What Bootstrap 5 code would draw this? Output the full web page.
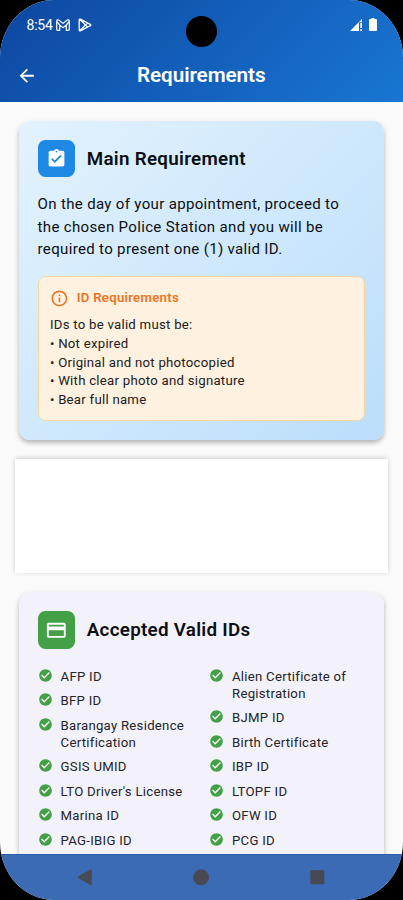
<!DOCTYPE html>
<html lang="en">
<head>
<meta charset="utf-8">
<meta name="viewport" content="width=device-width, initial-scale=1">
<title>Requirements</title>
<link href="https://cdn.jsdelivr.net/npm/bootstrap@5.3.0/dist/css/bootstrap.min.css" rel="stylesheet">
<style>
html,body{height:100%;background:#000;overflow:hidden}
body{font-family:Roboto,"Liberation Sans",sans-serif;color:#0b0e13}
svg{display:block;flex:none}
.phone{height:900px;width:403px;border-radius:54px/58px;background:#fafafa}
.top-bar{height:102px;background:linear-gradient(135deg,#0d47a1,#1976d2)}
.status{height:50px;padding:0 26px 0 26.5px}
.clock{font-size:14px;letter-spacing:-.2px;line-height:48px;margin-top:-1px}
.mail-icon{margin-left:3px}
.play-icon{margin-left:8px}
.battery-icon{margin-left:6px}
.status svg{margin-top:-1px}
.camera{width:31px;height:31px;border-radius:50%;background:#000;left:186px;top:16px}
.title-row{height:51px;padding:0 17px}
.page-title{font-size:20.7px;font-weight:600;letter-spacing:-.08px;line-height:50px;margin:-1px 20px 0 0}
.content-area{padding:19px 18.8px 0;min-height:0}
.panel{border-radius:11.3px;padding:18.8px;box-shadow:0 3px 4px rgba(0,0,0,.22),0 2px 7px rgba(0,0,0,.08)}
.panel-blue{background:linear-gradient(135deg,#e3f2fd,#bbdefb);height:319.3px}
.panel-ids{background:#f3f2fa}
.tile{width:37.7px;height:37.7px;border-radius:7.5px}
.tile-blue{background:#1e88e5}
.tile-green{background:#43a047}
.panel-title{font-size:18.8px;font-weight:600;letter-spacing:.28px;line-height:26px;margin-left:11.5px}
.intro{font-size:15.05px;line-height:22.6px;letter-spacing:.32px;padding-top:.7px;margin:15px 0 14.8px}
.note{height:145.3px;background:#fff1df;border:1px solid #f4d5a6;border-radius:7.5px;padding:11.6px 11.3px;font-size:13.2px;line-height:18.85px;letter-spacing:.26px;color:#20201e}
.note-head{color:#ec7423;font-weight:600;letter-spacing:.27px;gap:8px;margin-bottom:7.8px;line-height:18.8px}
.note-head span{padding-top:1px}
.blank{height:114px;margin:18.8px -4px 19.2px;background:#fff;box-shadow:0 -1px 5px rgba(0,0,0,.18)}
.id-grid{display:grid;grid-template-columns:1fr 1fr;column-gap:15px;margin-top:18.8px}
.id-grid li{display:flex;gap:8px;margin-bottom:7.55px;font-size:13.2px;line-height:17px;letter-spacing:.26px;color:#23232a}
.nav-strip{height:46px;background:#3c6bb5;border-top:1px solid #285ba8}
</style>
</head>
<body>
<svg width="0" height="0" class="position-absolute"><symbol id="ok" viewBox="0 0 24 24"><path fill="#43a047" d="M12 2C6.48 2 2 6.48 2 12s4.48 10 10 10 10-4.480 10-10S17.520 2 12 2z"/><path fill="#fff" d="M10 17l-5-5 1.410-1.410L10 14.170l7.590-7.590L19 8l-9 9z"/></symbol></svg>
<div class="phone d-flex flex-column overflow-hidden position-relative">
  <header class="top-bar text-white flex-shrink-0">
    <div class="status d-flex align-items-center">
      <span class="clock">8:54</span>
      <svg class="mail-icon" width="14" height="12" viewBox="0 0 14 12" fill="none" stroke="#fff" stroke-width="1.200" stroke-linejoin="round"><path d="M.7 2v8.300q0 1 1 1h2V6L7 8.600 10.300 6v5.300h2q1 0 1-1V2Q13 .2 11.300 1L7 4.400 2.700 1Q1 .2 .7 2zM.9 2.600L3.700 6M13.100 2.600L10.300 6"/></svg>
      <svg class="play-icon" width="14" height="14" viewBox="0 0 14 14" fill="none" stroke="#fff" stroke-width="1.300" stroke-linejoin="round"><path d="M1.200 1.700v10.600q.1 1 1.100.5l10-5.100q1-.7 0-1.400l-10-5.100q-1-.5-1.100.5zM1.700 1.200l7.700 7.700M1.700 12.800l7.700-7.700"/></svg>
      <svg class="ms-auto" width="13" height="12" viewBox="0 0 13 12" fill="#fff"><path d="M0 12L9 3v9zM9 3l3-3v3.200H9zM10.300 4h1.700v5h-1.700zM10.300 10.200h1.700V12h-1.700z"/></svg>
      <svg class="battery-icon" width="8" height="13" viewBox="0 0 8 13" fill="#fff"><path d="M2.500 0h3v1H7q1 0 1 1v10q0 1-1 1H1q-1 0-1-1V2q0-1 1-1h1.500z"/></svg>
    </div>
    <div class="camera position-absolute"></div>
    <div class="title-row d-flex align-items-center">
      <svg width="19.500" height="19.500" viewBox="1 1 22 22" fill="#fff"><path d="M20 11H7.830l5.590-5.590L12 4l-8 8 8 8 1.410-1.410L7.830 13H20v-2z"/></svg>
      <h1 class="page-title flex-grow-1 text-center">Requirements</h1>
    </div>
  </header>
  <main class="content-area flex-grow-1 overflow-hidden">
    <section class="panel panel-blue">
      <div class="d-flex align-items-center">
        <div class="tile tile-blue d-flex align-items-center justify-content-center">
          <svg width="21" height="21" viewBox="0 0 24 24" fill="#fff"><path d="M19 3h-4.180C14.400 1.840 13.300 1 12 1s-2.400.84-2.820 2H5c-1.100 0-2 .9-2 2v14c0 1.100.9 2 2 2h14c1.100 0 2-.9 2-2V5c0-1.100-.9-2-2-2zm-7 0c.55 0 1 .45 1 1s-.45 1-1 1-1-.45-1-1 .45-1 1-1zm-2 14l-4-4 1.410-1.410L10 14.170l6.590-6.590L18 9l-8 8z"/></svg>
        </div>
        <h2 class="panel-title mb-0">Main Requirement</h2>
      </div>
      <p class="intro">On the day of your appointment, proceed to<br>the chosen Police Station and you will be<br>required to present one (1) valid ID.</p>
      <div class="note">
        <div class="note-head d-flex align-items-center">
          <svg width="18.800" height="18.800" viewBox="0 0 24 24" fill="currentColor"><path d="M11 7h2v2h-2zm0 4h2v6h-2zm1-9C6.480 2 2 6.480 2 12s4.480 10 10 10 10-4.480 10-10S17.520 2 12 2zm0 18c-4.410 0-8-3.590-8-8s3.590-8 8-8 8 3.590 8 8-3.590 8-8 8z"/></svg>
          <span>ID Requirements</span>
        </div>
        <div>IDs to be valid must be:</div>
        <div>• Not expired</div>
        <div>• Original and not photocopied</div>
        <div>• With clear photo and signature</div>
        <div>• Bear full name</div>
      </div>
    </section>
    <div class="blank"></div>
    <section class="panel panel-ids">
      <div class="d-flex align-items-center">
        <div class="tile tile-green d-flex align-items-center justify-content-center">
          <svg width="22.600" height="22.600" viewBox="0 0 24 24" fill="#fff"><path d="M20 4H4c-1.110 0-1.990.89-1.990 2L2 18c0 1.110.89 2 2 2h16c1.110 0 2-.89 2-2V6c0-1.110-.89-2-2-2zm0 14H4v-6h16v6zm0-10H4V6h16v2z"/></svg>
        </div>
        <h2 class="panel-title mb-0">Accepted Valid IDs</h2>
      </div>
      <div class="id-grid">
        <ul class="list-unstyled mb-0">
          <li><svg width="15" height="15"><use href="#ok"/></svg><span>AFP ID</span></li>
          <li><svg width="15" height="15"><use href="#ok"/></svg><span>BFP ID</span></li>
          <li><svg width="15" height="15"><use href="#ok"/></svg><span>Barangay Residence<br>Certification</span></li>
          <li><svg width="15" height="15"><use href="#ok"/></svg><span>GSIS UMID</span></li>
          <li><svg width="15" height="15"><use href="#ok"/></svg><span>LTO Driver's License</span></li>
          <li><svg width="15" height="15"><use href="#ok"/></svg><span>Marina ID</span></li>
          <li><svg width="15" height="15"><use href="#ok"/></svg><span>PAG-IBIG ID</span></li>
        </ul>
        <ul class="list-unstyled mb-0">
          <li><svg width="15" height="15"><use href="#ok"/></svg><span>Alien Certificate of<br>Registration</span></li>
          <li><svg width="15" height="15"><use href="#ok"/></svg><span>BJMP ID</span></li>
          <li><svg width="15" height="15"><use href="#ok"/></svg><span>Birth Certificate</span></li>
          <li><svg width="15" height="15"><use href="#ok"/></svg><span>IBP ID</span></li>
          <li><svg width="15" height="15"><use href="#ok"/></svg><span>LTOPF ID</span></li>
          <li><svg width="15" height="15"><use href="#ok"/></svg><span>OFW ID</span></li>
          <li><svg width="15" height="15"><use href="#ok"/></svg><span>PCG ID</span></li>
        </ul>
      </div>
    </section>
  </main>
  <nav class="nav-strip d-flex align-items-center flex-shrink-0" aria-label="System navigation">
    <svg width="403" height="45" viewBox="0 0 403 45" fill="#474a52"><path d="M78.500 21.300L90 14.800q1.800-.7 1.800 1v13q0 1.700-1.800 1L78.500 23.300q-1.200-1 0-2z"/><circle cx="201" cy="22.300" r="8"/><rect x="310.300" y="15.300" width="14" height="14" rx="1"/></svg>
  </nav>
</div>
<script src="https://cdn.jsdelivr.net/npm/bootstrap@5.3.0/dist/js/bootstrap.bundle.min.js"></script>
</body>
</html>
